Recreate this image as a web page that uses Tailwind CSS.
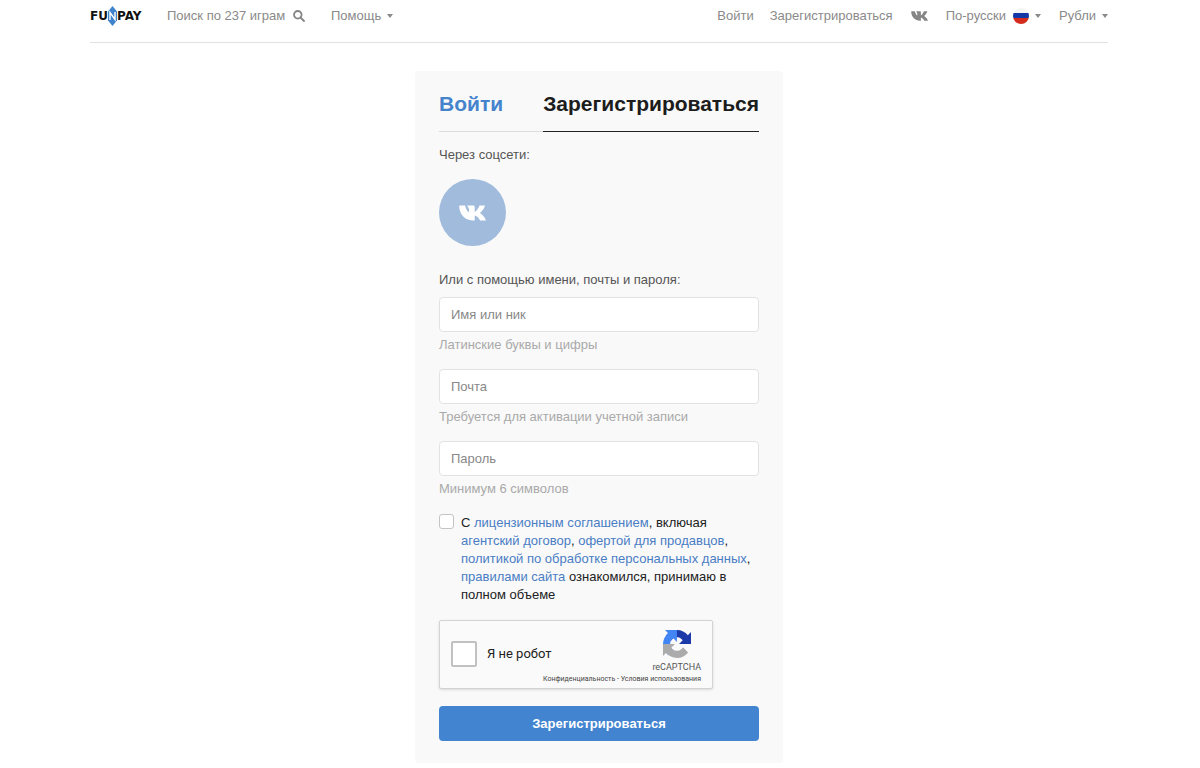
<!DOCTYPE html>
<html lang="ru">
<head>
  <meta charset="UTF-8" />
  <meta name="viewport" content="width=device-width, initial-scale=1.0"/>
  <title>Регистрация - FunPay</title>
  <script src="https://cdn.jsdelivr.net/npm/@tailwindcss/browser@4"></script>
</head>
<body class="bg-white pr-[2px] font-['Liberation_Sans',Arial,sans-serif] text-[13px] leading-[18px] text-[#212121]">

  <!-- Header -->
  <header class="mx-auto flex h-[43px] max-w-[1018px] items-start justify-between border-b border-[#e2e2e2] pt-[6px] text-[#8a8a8a]">
    <div class="flex h-5 items-center">
      <a href="#" aria-label="FunPay" class="flex w-[53px] items-center font-['DejaVu_Sans',sans-serif] text-[12px] font-bold text-[#111]">
        <span>FU</span>
        <svg class="h-5 w-[9px] shrink-0" viewBox="0 0 9 20" aria-hidden="true">
          <path d="M4.500 0 9 5.500V14.500L4.500 20 0 14.500V5.500z" fill="#3f83cc"/>
          <path d="M2 14V6.500l5 7V6" fill="none" stroke="#fff" stroke-width="1.400"/>
        </svg>
        <span>PAY</span>
      </a>
      <form class="ml-6 flex items-center">
        <input type="text" aria-label="Поиск по играм" placeholder="Поиск по 237 играм" class="w-[120px] outline-none placeholder:text-[#8a8a8a]" />
        <button type="submit" aria-label="Найти" class="ml-[6px]">
          <svg class="block size-3" viewBox="0 0 12 12" fill="none" stroke="#858585" stroke-width="1.800" stroke-linecap="round">
            <circle cx="4.800" cy="4.800" r="3.800"/>
            <path d="m8 8 3 3"/>
          </svg>
        </button>
      </form>
      <button type="button" class="ml-[26px] flex items-center gap-[6px]">
        Помощь
        <span class="border-x-[3px] border-t-[4px] border-x-transparent border-t-[#8a8a8a]"></span>
      </button>
    </div>

    <nav class="flex h-5 items-center">
      <a href="#">Войти</a>
      <a href="#" class="ml-4">Зарегистрироваться</a>
      <a href="#" aria-label="ВКонтакте" class="ml-[18px]">
        <svg class="block h-[10px] w-[17px]" viewBox="0 0 27 16" fill="#858585">
          <path d="M1 .500h5c1 3.500 2.500 6 4 6.800V4L8.200.500H14c1.200 0 1.700.500 1.700 1.500v5c2-1 3.800-4 4.800-6.500H26c-.500 2.500-2.800 5.500-5 7.500 2.500 1.800 5 4.500 6 7.500h-6c-1-2.300-2.900-4.500-5.300-5v5h-1.200C6.500 15.500.600 10.500.200 1.300.200.800.500.500 1 .500z"/>
        </svg>
      </a>
      <label class="ml-[18px] flex items-center">
        <select aria-label="Язык" class="field-sizing-content appearance-none outline-none">
          <option>По-русски</option>
        </select>
        <svg class="ml-[7px] size-4" viewBox="0 0 16 16" aria-hidden="true">
          <clipPath id="flag"><circle cx="8" cy="8" r="8"/></clipPath>
          <g clip-path="url(#flag)">
            <path d="M0 0h16v5H0z" fill="#f5f5f5"/>
            <path d="M0 5h16v5H0z" fill="#1437a8"/>
            <path d="M0 10h16v6H0z" fill="#d52b1e"/>
          </g>
        </svg>
        <span class="ml-[6px] border-x-[3px] border-t-[4px] border-x-transparent border-t-[#8a8a8a]"></span>
      </label>
      <label class="ml-[18px] flex items-center gap-[6px]">
        <select aria-label="Валюта" class="field-sizing-content appearance-none outline-none">
          <option>Рубли</option>
        </select>
        <span class="border-x-[3px] border-t-[4px] border-x-transparent border-t-[#8a8a8a]"></span>
      </label>
    </nav>
  </header>

  <!-- Registration card -->
  <main class="mx-auto mt-7 mb-1 max-w-[368px] rounded bg-[#f9f9f9] px-6 pt-3 pb-[22px]">
    <div class="flex justify-between border-b border-[#dcdcdc] text-[21px] leading-[42px] font-bold">
      <a href="#" class="text-[#4584cd]">Войти</a>
      <a href="#" class="-mb-px border-b border-[#222] pb-[6px] text-[#1c1c1c]">Зарегистрироваться</a>
    </div>

    <p class="mt-[14px] text-[#555]">Через соцсети:</p>
    <a href="#" aria-label="Войти через ВКонтакте" class="mt-[15px] flex size-[67px] items-center justify-center rounded-full bg-[#a0bbdc]">
      <svg class="h-4 w-[27px]" viewBox="0 0 27 16" fill="#fff">
        <path d="M1 .500h5c1 3.500 2.500 6 4 6.800V4L8.200.500H14c1.200 0 1.700.500 1.700 1.500v5c2-1 3.800-4 4.800-6.500H26c-.500 2.500-2.800 5.500-5 7.500 2.500 1.800 5 4.500 6 7.500h-6c-1-2.300-2.900-4.500-5.300-5v5h-1.200C6.500 15.500.600 10.500.200 1.300.200.800.500.500 1 .500z"/>
      </svg>
    </a>

    <form class="mt-[25px]">
      <p class="mb-2 text-[#555]">Или с помощью имени, почты и пароля:</p>
      <div class="flex flex-col gap-[15px] text-[#a9a9a9]">
        <div>
          <input type="text" aria-label="Имя или ник" aria-describedby="name-help" placeholder="Имя или ник" class="block h-[35px] w-full rounded border border-[#e2e2e2] bg-white px-[11px] text-[#333] outline-none placeholder:text-[#888]" />
          <p id="name-help" class="mt-1">Латинские буквы и цифры</p>
        </div>
        <div>
          <input type="email" aria-label="Почта" aria-describedby="email-help" placeholder="Почта" class="block h-[35px] w-full rounded border border-[#e2e2e2] bg-white px-[11px] text-[#333] outline-none placeholder:text-[#888]" />
          <p id="email-help" class="mt-1">Требуется для активации учетной записи</p>
        </div>
        <div>
          <input type="password" aria-label="Пароль" aria-describedby="password-help" placeholder="Пароль" class="block h-[35px] w-full rounded border border-[#e2e2e2] bg-white px-[11px] text-[#333] outline-none placeholder:text-[#888]" />
          <p id="password-help" class="mt-1">Минимум 6 символов</p>
        </div>
      </div>

      <div class="mt-4 flex items-start gap-[7px]">
        <input type="checkbox" id="agree" class="size-[15px] shrink-0 appearance-none rounded-[3px] border border-[#c4c4c4] bg-white checked:bg-[#4284d0]" />
        <label for="agree">С <a href="#" class="text-[#4a7dc4]">лицензионным соглашением</a>, включая <a href="#" class="text-[#4a7dc4]">агентский договор</a>, <a href="#" class="text-[#4a7dc4]">офертой для продавцов</a>, <a href="#" class="text-[#4a7dc4]">политикой по обработке персональных данных</a>, <a href="#" class="text-[#4a7dc4]">правилами сайта</a> ознакомился, принимаю в полном объеме</label>
      </div>

      <!-- Captcha -->
      <div class="mt-4 flex h-[69px] w-[274px] flex-col rounded-[2px] border border-[#d3d3d3] bg-[#fafafa] pr-[11px] pl-[11px] font-['Roboto',sans-serif] text-[#222] shadow-sm">
        <div class="flex h-[53px] justify-between">
          <div class="flex items-center gap-[10px] pt-3">
            <input type="checkbox" id="robot" class="size-[26px] appearance-none rounded-[2px] border-2 border-[#c1c1c1] bg-white checked:bg-[#4284d0]" />
            <label for="robot" class="text-[13px]">Я не робот</label>
          </div>
          <div class="flex flex-col items-center pt-[9px]">
            <svg class="size-7" viewBox="0 0 64 64" aria-hidden="true">
              <path fill="#1c3aa9" d="M64 31.955l-.033-1.370V4.687l-7.160 7.160C50.948 4.674 42.033.093 32.050.093c-10.400 0-19.622 4.960-25.458 12.640l11.736 11.860a15.550 15.550 0 0 1 4.754-5.334c2.050-1.600 4.952-2.906 8.968-2.906.485 0 .860.057 1.135.163 4.976.393 9.288 3.140 11.828 7.124l-8.307 8.307L64 31.953"/>
              <path fill="#4285f4" d="M31.862.094l-1.370.033H4.594l7.160 7.160C4.580 13.147 0 22.060 0 32.046c0 10.400 4.960 19.622 12.640 25.458L24.500 45.768a15.550 15.550 0 0 1-5.334-4.754c-1.600-2.050-2.906-4.952-2.906-8.968 0-.485.057-.860.163-1.135.393-4.976 3.140-9.288 7.124-11.828l8.307 8.307L31.860.095"/>
              <path fill="#ababab" d="M.001 32.045l.033 1.370v25.898l7.160-7.160c5.860 7.173 14.774 11.754 24.760 11.754 10.400 0 19.622-4.960 25.458-12.640l-11.736-11.860a15.550 15.550 0 0 1-4.754 5.334c-2.050 1.600-4.952 2.906-8.968 2.906-.485 0-.860-.057-1.135-.163-4.976-.393-9.288-3.140-11.828-7.124l8.307-8.307c-10.522.040-22.400.066-27.295-.005"/>
            </svg>
            <span class="mt-1 text-[9px] leading-[10px] text-[#555]">reCAPTCHA</span>
          </div>
        </div>
        <p class="text-right text-[7px] leading-[10px] text-[#444]"><a href="#">Конфиденциальность</a> - <a href="#">Условия использования</a></p>
      </div>

      <button type="submit" class="mt-[17px] block h-[35px] w-full rounded bg-[#4284d0] font-bold text-white">Зарегистрироваться</button>
    </form>
  </main>
</body>
</html>
